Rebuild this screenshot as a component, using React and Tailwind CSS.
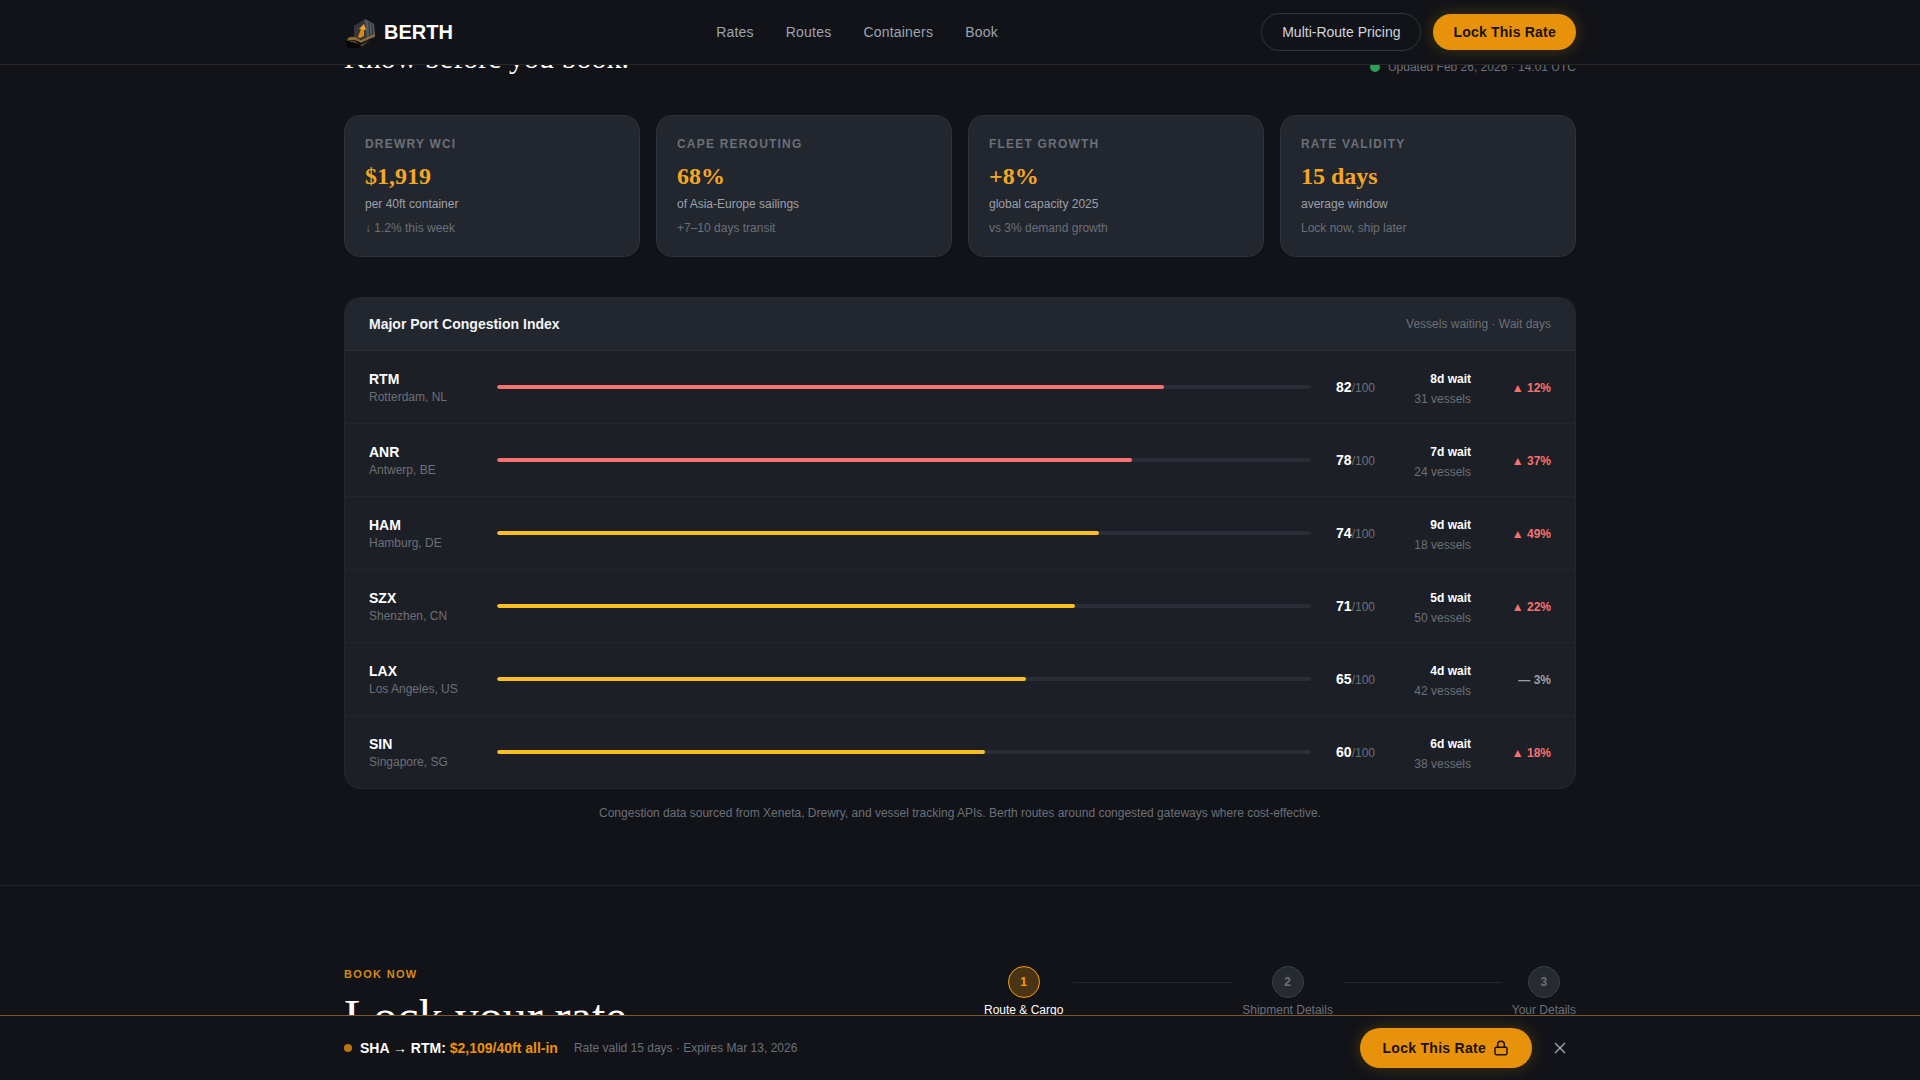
import React from "react";
import { Lock, X } from "lucide-react";

const sans = "font-['Liberation_Sans',Arial,sans-serif]";

const stats = [
  { label: "Drewry WCI", value: "$1,919", desc: "per 40ft container", foot: "↓ 1.2% this week" },
  { label: "Cape Rerouting", value: "68%", desc: "of Asia-Europe sailings", foot: "+7–10 days transit" },
  { label: "Fleet Growth", value: "+8%", desc: "global capacity 2025", foot: "vs 3% demand growth" },
  { label: "Rate Validity", value: "15 days", desc: "average window", foot: "Lock now, ship later" },
];

const ports = [
  { code: "RTM", name: "Rotterdam, NL", score: 82, wait: "8d wait", vessels: "31 vessels", trend: "▲ 12%", hot: true, up: true },
  { code: "ANR", name: "Antwerp, BE", score: 78, wait: "7d wait", vessels: "24 vessels", trend: "▲ 37%", hot: true, up: true },
  { code: "HAM", name: "Hamburg, DE", score: 74, wait: "9d wait", vessels: "18 vessels", trend: "▲ 49%", up: true },
  { code: "SZX", name: "Shenzhen, CN", score: 71, wait: "5d wait", vessels: "50 vessels", trend: "▲ 22%", up: true },
  { code: "LAX", name: "Los Angeles, US", score: 65, wait: "4d wait", vessels: "42 vessels", trend: "— 3%" },
  { code: "SIN", name: "Singapore, SG", score: 60, wait: "6d wait", vessels: "38 vessels", trend: "▲ 18%", up: true },
];

// container stack + rising arrow mark
const Logo = () => (
  <svg width="32" height="32" viewBox="0 0 32 32" className="shrink-0">
    <path d="M10 10 L21 3 L30 8 L31 21 L20 25 L10 21 Z" fill="#34373c" />
    <path d="M21 3 L30 8 L31 21 L23 23 Z" fill="#565a60" />
    <path d="M25 6 L25.5 21 M28 7.5 L28.5 20" stroke="#2a2c31" strokeWidth="1" />
    <path d="M1 25 L9 21 L23 26 L14 32 L4 32 Z" fill="#050607" />
    <path d="M4 22 C10 19 13 22 17 24 L31 18 L31 20 L17 27 C12 24 8 23 3 25 Z" fill="#8a6a3a" />
    <path d="M6 24.5 C10 24 13 26 16 29 L26 24 L18 30.5 C13 27 9 26 6 26 Z" fill="#5e4a2c" />
    <path d="M14 21 L17 13 L20 13 L20 20 L16 22 Z" fill="#e0880c" />
    <path d="M15 13 L20 8 L22 14 Z" fill="#f5a623" />
  </svg>
);

const Nav = () => (
  <header className="absolute inset-x-0 top-0 z-20 h-[65px] bg-[#111318] border-b border-[#2a2622]">
    <div className="max-w-[1280px] mx-auto px-6 h-full flex items-center justify-between">
      <div className="flex items-center gap-2">
        <Logo />
        <span className="text-xl font-bold text-white">BERTH</span>
      </div>
      <nav className="flex items-center gap-8 text-sm tracking-[0.015em] text-[#9ca3af]">
        <span>Rates</span>
        <span>Routes</span>
        <span>Containers</span>
        <span>Book</span>
      </nav>
      <div className="flex items-center gap-3">
        <button className="h-[38px] px-5 rounded-full border border-[#33363d] text-sm text-[#d1d5db]">Multi-Route Pricing</button>
        <button className="h-9 px-5 rounded-full bg-[#e8920c] text-sm font-bold tracking-[0.015em] text-[#1a1206] shadow-[0_0_16px_rgba(245,158,11,0.25)]">Lock This Rate</button>
      </div>
    </div>
  </header>
);

const StatCard = ({ stat }) => (
  <div className="rounded-2xl border border-[#2d3139] bg-[#22262e] px-5 pt-5 pb-5">
    <div className="text-xs font-bold uppercase tracking-[0.1em] leading-4 text-[#6b7078]">{stat.label}</div>
    <div className="mt-2 font-['Liberation_Serif',serif] text-2xl font-bold leading-8 text-[#f5a623]">{stat.value}</div>
    <div className="mt-1 text-xs leading-4 text-[#9ca0a8]">{stat.desc}</div>
    <div className="mt-2 text-xs leading-4 text-[#6b7078]">{stat.foot}</div>
  </div>
);

const PortRow = ({ port }) => (
  <div className="h-[73px] last:h-[72px] px-6 grid grid-cols-[104px_1fr_40px_72px_56px] gap-6 items-center border-b border-[#22252c] last:border-b-0">
    <div>
      <div className="text-sm font-bold leading-5 text-white">{port.code}</div>
      <div className="text-xs leading-4 text-[#6b7078]">{port.name}</div>
    </div>
    <div className="h-1 rounded-full bg-[#2a2d38] overflow-hidden">
      <div className={port.hot ? "h-full rounded-full bg-[#f87171]" : "h-full rounded-full bg-[#fbbf24]"} style={{ width: `${port.score}%` }} />
    </div>
    <div className="text-right whitespace-nowrap text-xs text-[#6b7078]">
      <span className="text-sm font-bold text-white">{port.score}</span>/100
    </div>
    <div className="text-right whitespace-nowrap pt-1">
      <div className="text-xs font-bold leading-4 text-white">{port.wait}</div>
      <div className="mt-1 text-xs leading-4 text-[#6b7078]">{port.vessels}</div>
    </div>
    <div className={port.up ? "pt-px text-right text-xs font-bold text-[#f87171]" : "pt-px text-right text-xs font-bold text-[#9ca0a8]"}>{port.trend}</div>
  </div>
);

const Step = ({ n, label, active }) => (
  <div className="flex flex-col items-center">
    <div className={active
      ? "w-8 h-8 rounded-full flex items-center justify-center text-xs font-bold border border-[#f59e0b] bg-[#4a3413] text-[#f59e0b]"
      : "w-8 h-8 rounded-full flex items-center justify-center text-xs font-bold border border-[#3a3e46] bg-[#262a31] text-[#6b7078]"}>{n}</div>
    <div className={active ? "mt-1 text-xs leading-4 text-white whitespace-nowrap" : "mt-1 text-xs leading-4 text-[#6b7078] whitespace-nowrap"}>{label}</div>
  </div>
);

const BottomBar = () => (
  <div className="absolute inset-x-0 bottom-0 z-20 h-[65px] bg-[#111318] border-t border-[#7a5a22]">
    <div className="max-w-[1280px] mx-auto px-6 h-full flex items-center justify-between">
      <div className="flex items-center">
        <span className="w-2 h-2 rounded-full bg-[#b9770e] mr-2" />
        <span className="text-sm font-bold text-white">SHA → RTM: <span className="text-[#e8920c]">$2,109/40ft all-in</span></span>
        <span className="ml-4 text-xs text-[#6b7078]">Rate valid 15 days · Expires Mar 13, 2026</span>
      </div>
      <div className="flex items-center gap-3">
        <button className="h-10 px-[23px] rounded-full bg-[#e8920c] flex items-center gap-[7px] text-sm font-bold tracking-[0.02em] text-[#1a1206] shadow-[0_0_16px_rgba(245,158,11,0.25)]">
          Lock This Rate
          <Lock size={16} strokeWidth={2.25} />
        </button>
        <button className="p-[7px] text-[#9ca0a8]"><X size={18} /></button>
      </div>
    </div>
  </div>
);

export default function App() {
  return (
    <div className={`relative h-screen overflow-hidden bg-[#111318] ${sans}`}>
      <Nav />
      <main>
        <section className="max-w-[1280px] mx-auto px-6 pt-[38px] pb-16">
          <div className="flex items-end justify-between mb-[37px]">
            <h2 className="font-['Liberation_Serif',serif] text-[30px] leading-10 text-white">Know before you book.</h2>
            <div className="flex items-center gap-2 text-xs leading-4 text-[#6b7078] mb-[3px]">
              <span className="w-2.5 h-2.5 rounded-full bg-[#2f9e58]" />
              Updated Feb 26, 2026 · 14:01 UTC
            </div>
          </div>
          <div className="grid grid-cols-4 gap-4">
            {stats.map((s) => <StatCard key={s.label} stat={s} />)}
          </div>
          <div className="mt-10 rounded-2xl border border-[#23262d] bg-[#1c1f26] overflow-hidden">
            <div className="h-[53px] px-6 flex items-center justify-between bg-[#22262e] border-b border-[#2d3139]">
              <div className="text-sm font-bold text-[#f3f4f6]">Major Port Congestion Index</div>
              <div className="text-xs text-[#6b7078]">Vessels waiting · Wait days</div>
            </div>
            {ports.map((p) => <PortRow key={p.code} port={p} />)}
          </div>
          <p className="mt-4 text-center text-xs leading-4 text-[#6b7078]">
            Congestion data sourced from Xeneta, Drewry, and vessel tracking APIs. Berth routes around congested gateways where cost-effective.
          </p>
        </section>
        <section className="border-t border-[#1f2228] pt-20">
          <div className="max-w-[1280px] mx-auto px-6 grid grid-cols-2 gap-12">
            <div>
              <div className="text-[11px] font-bold uppercase tracking-[0.12em] leading-4 text-[#d58a12]">Book now</div>
              <h2 className="mt-[9px] font-['Liberation_Serif',serif] text-[48px] leading-[1.1] text-white">Lock your rate</h2>
            </div>
            <div className="flex items-start">
              <Step n="1" label="Route & Cargo" active />
              <div className="flex-1 h-px bg-[#23262d] mx-2.5 mt-4" />
              <Step n="2" label="Shipment Details" />
              <div className="flex-1 h-px bg-[#23262d] mx-2.5 mt-4" />
              <Step n="3" label="Your Details" />
            </div>
          </div>
        </section>
      </main>
      <BottomBar />
    </div>
  );
}
